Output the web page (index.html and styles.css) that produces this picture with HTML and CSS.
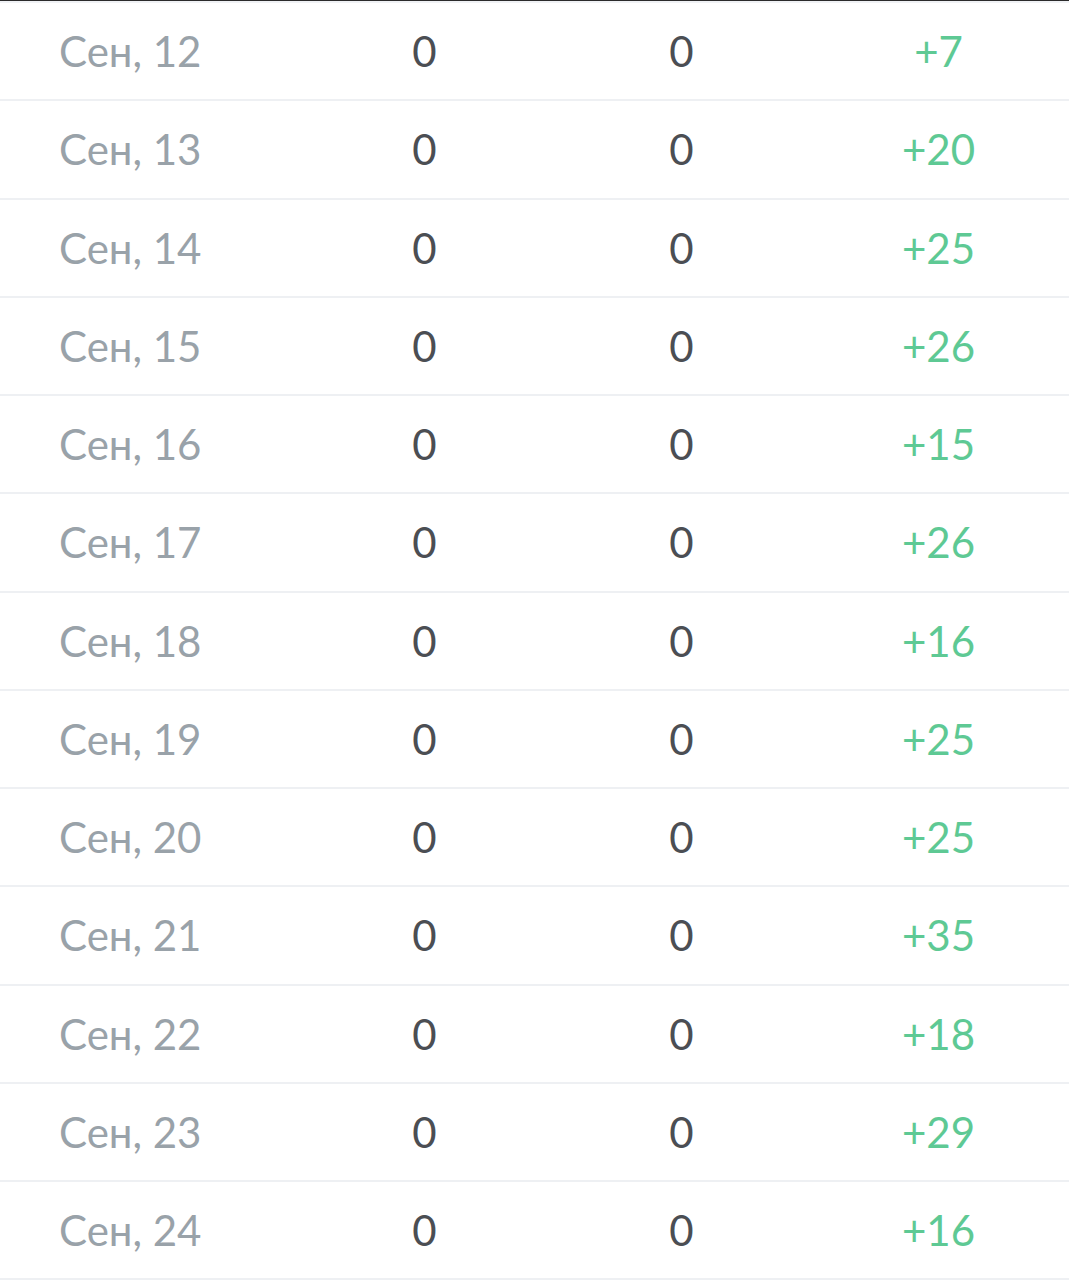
FILE: index.html
```html
<!DOCTYPE html>
<html lang="ru">
<head>
<meta charset="utf-8">
<title>Статистика</title>
<link rel="stylesheet" href="styles.css">
</head>
<body>
<div class="table">
  <div class="row"><div class="date">Сен, 12</div><div class="num">0</div><div class="num">0</div><div class="plus">+7</div></div>
  <div class="row"><div class="date">Сен, 13</div><div class="num">0</div><div class="num">0</div><div class="plus">+20</div></div>
  <div class="row"><div class="date">Сен, 14</div><div class="num">0</div><div class="num">0</div><div class="plus">+25</div></div>
  <div class="row"><div class="date">Сен, 15</div><div class="num">0</div><div class="num">0</div><div class="plus">+26</div></div>
  <div class="row"><div class="date">Сен, 16</div><div class="num">0</div><div class="num">0</div><div class="plus">+15</div></div>
  <div class="row"><div class="date">Сен, 17</div><div class="num">0</div><div class="num">0</div><div class="plus">+26</div></div>
  <div class="row"><div class="date">Сен, 18</div><div class="num">0</div><div class="num">0</div><div class="plus">+16</div></div>
  <div class="row"><div class="date">Сен, 19</div><div class="num">0</div><div class="num">0</div><div class="plus">+25</div></div>
  <div class="row"><div class="date">Сен, 20</div><div class="num">0</div><div class="num">0</div><div class="plus">+25</div></div>
  <div class="row"><div class="date">Сен, 21</div><div class="num">0</div><div class="num">0</div><div class="plus">+35</div></div>
  <div class="row"><div class="date">Сен, 22</div><div class="num">0</div><div class="num">0</div><div class="plus">+18</div></div>
  <div class="row"><div class="date">Сен, 23</div><div class="num">0</div><div class="num">0</div><div class="plus">+29</div></div>
  <div class="row"><div class="date">Сен, 24</div><div class="num">0</div><div class="num">0</div><div class="plus">+16</div></div>
</div>
</body>
</html>
```

FILE: styles.css
```css
html, body {
  margin: 0;
  padding: 0;
  background: #ffffff;
}
body {
  font-family: Lato, "Noto Sans", sans-serif;
  overflow: hidden;
}
.table {
  border-top: 1px solid #2b2b2b;
  background: #ffffff;
}
.row {
  display: grid;
  grid-template-columns: 296px 257px 257px 1fr;
  align-items: center;
  height: 96.25px;
  border-bottom: 2px solid #eef0f3;
  font-size: 42px;
  line-height: 1;
}
.row:first-child {
  border-top: 2px solid #f0f2f5;
}
.date {
  padding-left: 59px;
  color: #99a2a9;
}
.num {
  text-align: center;
  color: #4b4e53;
}
.plus {
  text-align: center;
  color: #5ec994;
  padding-right: 2px;
}
```
